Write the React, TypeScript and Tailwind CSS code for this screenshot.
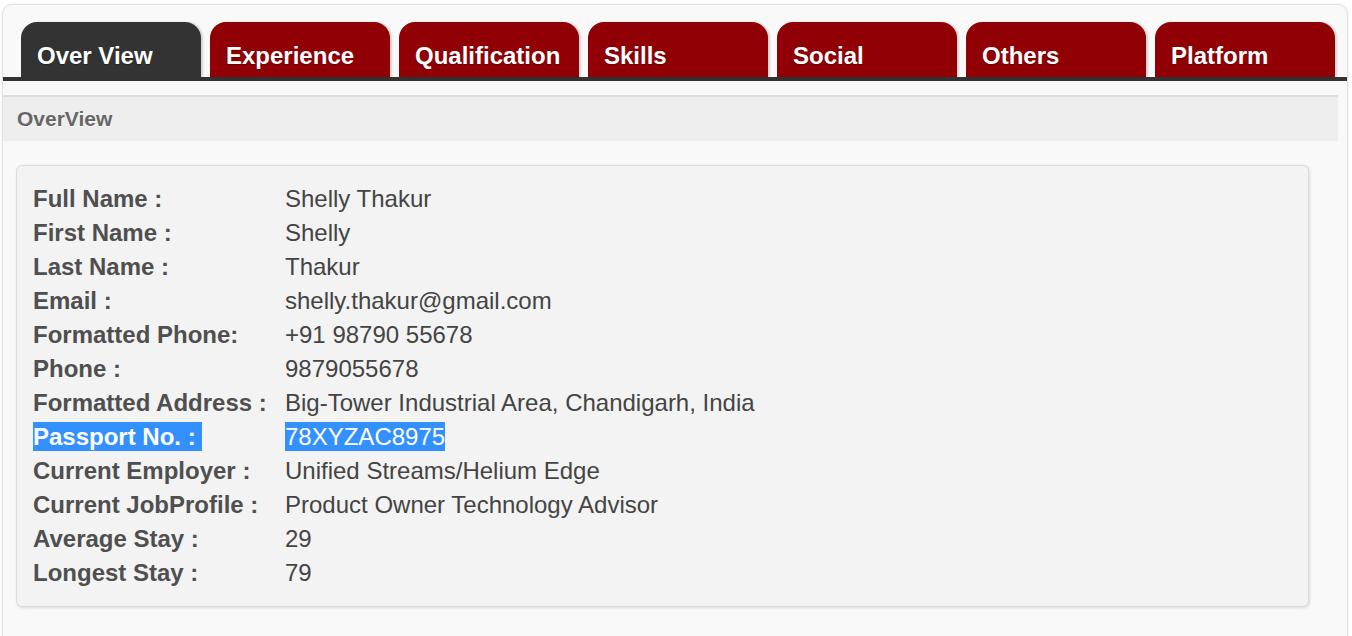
const tabs = ['Over View', 'Experience', 'Qualification', 'Skills', 'Social', 'Others', 'Platform'];

const rows: [string, string][] = [
  ['Full Name :', 'Shelly Thakur'],
  ['First Name :', 'Shelly'],
  ['Last Name :', 'Thakur'],
  ['Email :', 'shelly.thakur@gmail.com'],
  ['Formatted Phone:', '+91 98790 55678'],
  ['Phone :', '9879055678'],
  ['Formatted Address :', 'Big-Tower Industrial Area, Chandigarh, India'],
  ['Passport No. :', '78XYZAC8975'],
  ['Current Employer :', 'Unified Streams/Helium Edge'],
  ['Current JobProfile :', 'Product Owner Technology Advisor'],
  ['Average Stay :', '29'],
  ['Longest Stay :', '79'],
];

export default function App() {
  return (
    <div className="min-h-screen bg-white pt-1 pl-0.5 font-['Liberation_Sans',Arial,sans-serif]">
      <div className="w-[1346px] rounded-[10px] border border-[#e2e2e2] bg-[#f9f9f9] pb-10 shadow-[0_0_3px_rgba(0,0,0,0.08)]">
        <div className="flex gap-[9px] pl-[18px] pt-[17px]">
          {tabs.map((t, i) => (
            <div
              key={t}
              className={`flex h-[55px] w-[180px] items-center rounded-t-[16px] pl-4 pt-3 text-[24px] font-bold text-white shadow-[2px_0_2px_rgba(0,0,0,0.15)] [text-shadow:0_1px_1px_rgba(0,0,0,0.3)] ${
                i === 0 ? 'bg-[#333333]' : 'bg-[#900005]'
              }`}
            >
              {t}
            </div>
          ))}
        </div>
        <div className="h-1 bg-[#333333]" />
        <div className="mr-[9px] mt-[14px] flex h-[46px] items-center border-t-2 border-[#dddddd] bg-[#eeeeee] pl-[14px] text-[21px] font-bold text-[#666666] [text-shadow:0_1px_0_#fff]">
          OverView
        </div>
        <div className="ml-[13px] mt-6 w-[1293px] rounded-[6px] border border-[#dcdcdc] bg-[#f3f3f3] px-[16px] py-[16px] shadow-[1px_1px_3px_rgba(0,0,0,0.12)]">
          {rows.map(([label, value]) => {
            const sel = label.startsWith('Passport');
            return (
              <div key={label} className="flex h-[34px] items-center text-[24px]">
                <div className="w-[252px] shrink-0">
                  <span className={`font-bold ${sel ? 'bg-[#3390ff] py-[1px] pr-[6px] text-white' : 'text-[#4f4f4f]'}`}>
                    {label}
                  </span>
                </div>
                <div>
                  <span className={sel ? 'bg-[#3390ff] py-[1px] text-white' : 'text-[#444444]'}>{value}</span>
                </div>
              </div>
            );
          })}
        </div>
      </div>
    </div>
  );
}
